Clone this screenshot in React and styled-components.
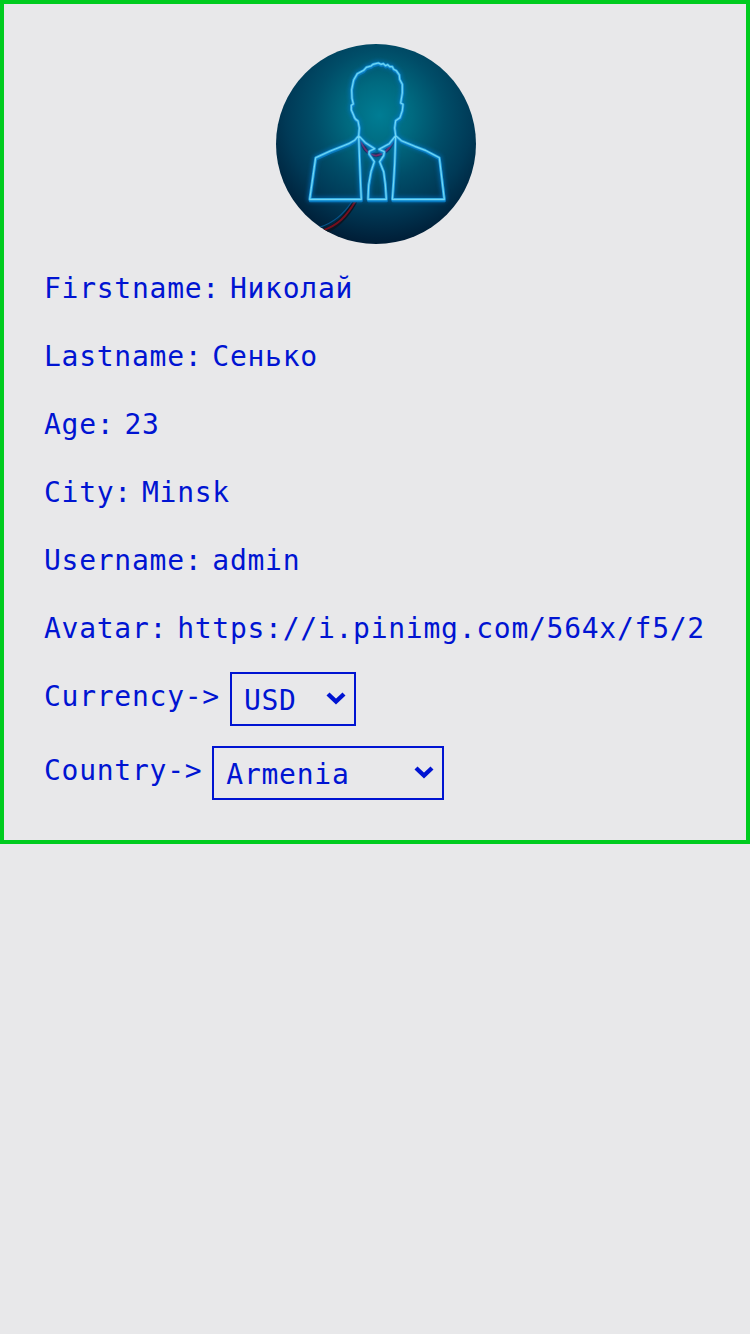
import React from "react";
import styled, { createGlobalStyle } from "styled-components";

const GlobalStyle = createGlobalStyle`
  *, *::before, *::after { box-sizing: border-box; }
  body {
    margin: 0;
    background: #e8e8ea;
    color: #0014d2;
    font-family: "DejaVu Sans Mono", "Liberation Mono", monospace;
    font-size: 28px;
    letter-spacing: 0.735px;
  }
`;

const Card = styled.main`
  display: flex;
  flex-direction: column;
  gap: 20px;
  padding: 40px;
  border: 4px solid #00cc1f;
`;

const AvatarFrame = styled.div`
  align-self: center;
  margin-left: 2px;
  width: 200px;
  height: 200px;
  border-radius: 50%;
  overflow: hidden;

  svg {
    display: block;
    width: 100%;
    height: 100%;
  }
`;

const Row = styled.div`
  display: flex;
  align-items: flex-start;
  gap: 10px;
  height: ${(p) => (p.$tall ? 54 : 48)}px;
  line-height: 50px;
  white-space: nowrap;
`;

const Label = styled.span`
  flex: none;
`;

const Value = styled.span`
  min-width: 0;
  overflow: hidden;
`;

const SelectBox = styled.button`
  display: flex;
  justify-content: space-between;
  align-items: flex-start;
  width: ${(p) => p.$width}px;
  height: 54px;
  padding: 1px 8px 0 12px;
  border: 2px solid #0014d2;
  border-radius: 0;
  background: transparent;
  color: inherit;
  font: inherit;
  line-height: 52px;
  letter-spacing: inherit;
`;

const Chevron = styled.svg`
  width: 20px;
  height: 14px;
  margin-top: 16px;
  fill: none;
  stroke: currentColor;
  stroke-width: 4.4;
`;

const outline = "M266 293L254 307Q238 318 219 324L181 339L137 359L119 484H274Q271 430 266 293L268 270L264 249Q254 244 251 232L244 216V202L250 198L246 181L245 155L251 126L262 107L281 97L289 88L303 84L309 79L325 75L333 79L340 77L346 83L353 80L359 86L367 86L371 94L379 98L388 111L389 124L397 139V165L392 195L399 199L397 218L390 239L377 248L374 270L377 293L394 308L434 325L466 337L508 359L523 484H367Q371 435 374 378L377 293L358 317L327 334L343 341L341 353L329 371L341 401L346 439L349 484H294L296 441L303 401L313 371L297 348L298 340L314 332L286 314Z";

function Avatar() {
  return (
    <AvatarFrame>
      <svg viewBox="18 18 600 600" role="img" aria-label="Avatar">
        <defs>
          <radialGradient id="backdrop" gradientUnits="userSpaceOnUse" cx="328" cy="232" r="390">
            <stop offset="0" stopColor="#007d94" />
            <stop offset="0.25" stopColor="#006a80" />
            <stop offset="0.5" stopColor="#004d68" />
            <stop offset="0.72" stopColor="#003a57" />
            <stop offset="1" stopColor="#001c35" />
          </radialGradient>
          <filter id="glow" x="-20%" y="-20%" width="140%" height="140%">
            <feGaussianBlur stdDeviation="6" />
          </filter>
        </defs>
        <rect x="18" y="18" width="600" height="600" fill="url(#backdrop)" />
        <g fill="none" strokeLinejoin="round" strokeLinecap="round">
          <path d="M254 492C230 535 200 568 158 582" stroke="#091725" strokeWidth="14" />
          <path d="M245 492C220 530 190 555 148 568" stroke="#07538a" strokeWidth="4" />
          <path d="M256 490C230 535 202 563 158 577" stroke="#74101f" strokeWidth="6" />
          <path d="M272 302Q284 348 318 352Q356 347 372 302" stroke="#152c59" strokeWidth="12" />
          <path d="M271 304Q284 348 318 353Q354 347 372 304" stroke="#83235b" strokeWidth="5" />
          <path d={outline} stroke="#007bd6" strokeWidth="14" opacity="0.6" filter="url(#glow)" />
          <path d={outline} stroke="#0878bd" strokeWidth="7" transform="translate(1 5)" />
          <path d={outline} stroke="#27a3df" strokeWidth="8" />
          <path d={outline} stroke="#72d6f4" strokeWidth="3.5" />
        </g>
      </svg>
    </AvatarFrame>
  );
}

function Select({ width, children }) {
  return (
    <SelectBox type="button" $width={width}>
      <span>{children}</span>
      <Chevron viewBox="0 0 20 14" aria-hidden="true">
        <path d="M2 3L10 10.5L18 3" />
      </Chevron>
    </SelectBox>
  );
}

const fields = [
  ["Firstname:", "Николай"],
  ["Lastname:", "Сенько"],
  ["Age:", "23"],
  ["City:", "Minsk"],
  ["Username:", "admin"],
  ["Avatar:", "https://i.pinimg.com/564x/f5/2"],
];

export default function App() {
  return (
    <>
      <GlobalStyle />
      <Card>
        <Avatar />
        {fields.map(([label, value]) => (
          <Row key={label}>
            <Label>{label}</Label>
            <Value>{value}</Value>
          </Row>
        ))}
        <Row $tall>
          <Label>Currency-&gt;</Label>
          <Select width={126}>USD</Select>
        </Row>
        <Row $tall>
          <Label>Country-&gt;</Label>
          <Select width={232}>Armenia</Select>
        </Row>
      </Card>
    </>
  );
}
